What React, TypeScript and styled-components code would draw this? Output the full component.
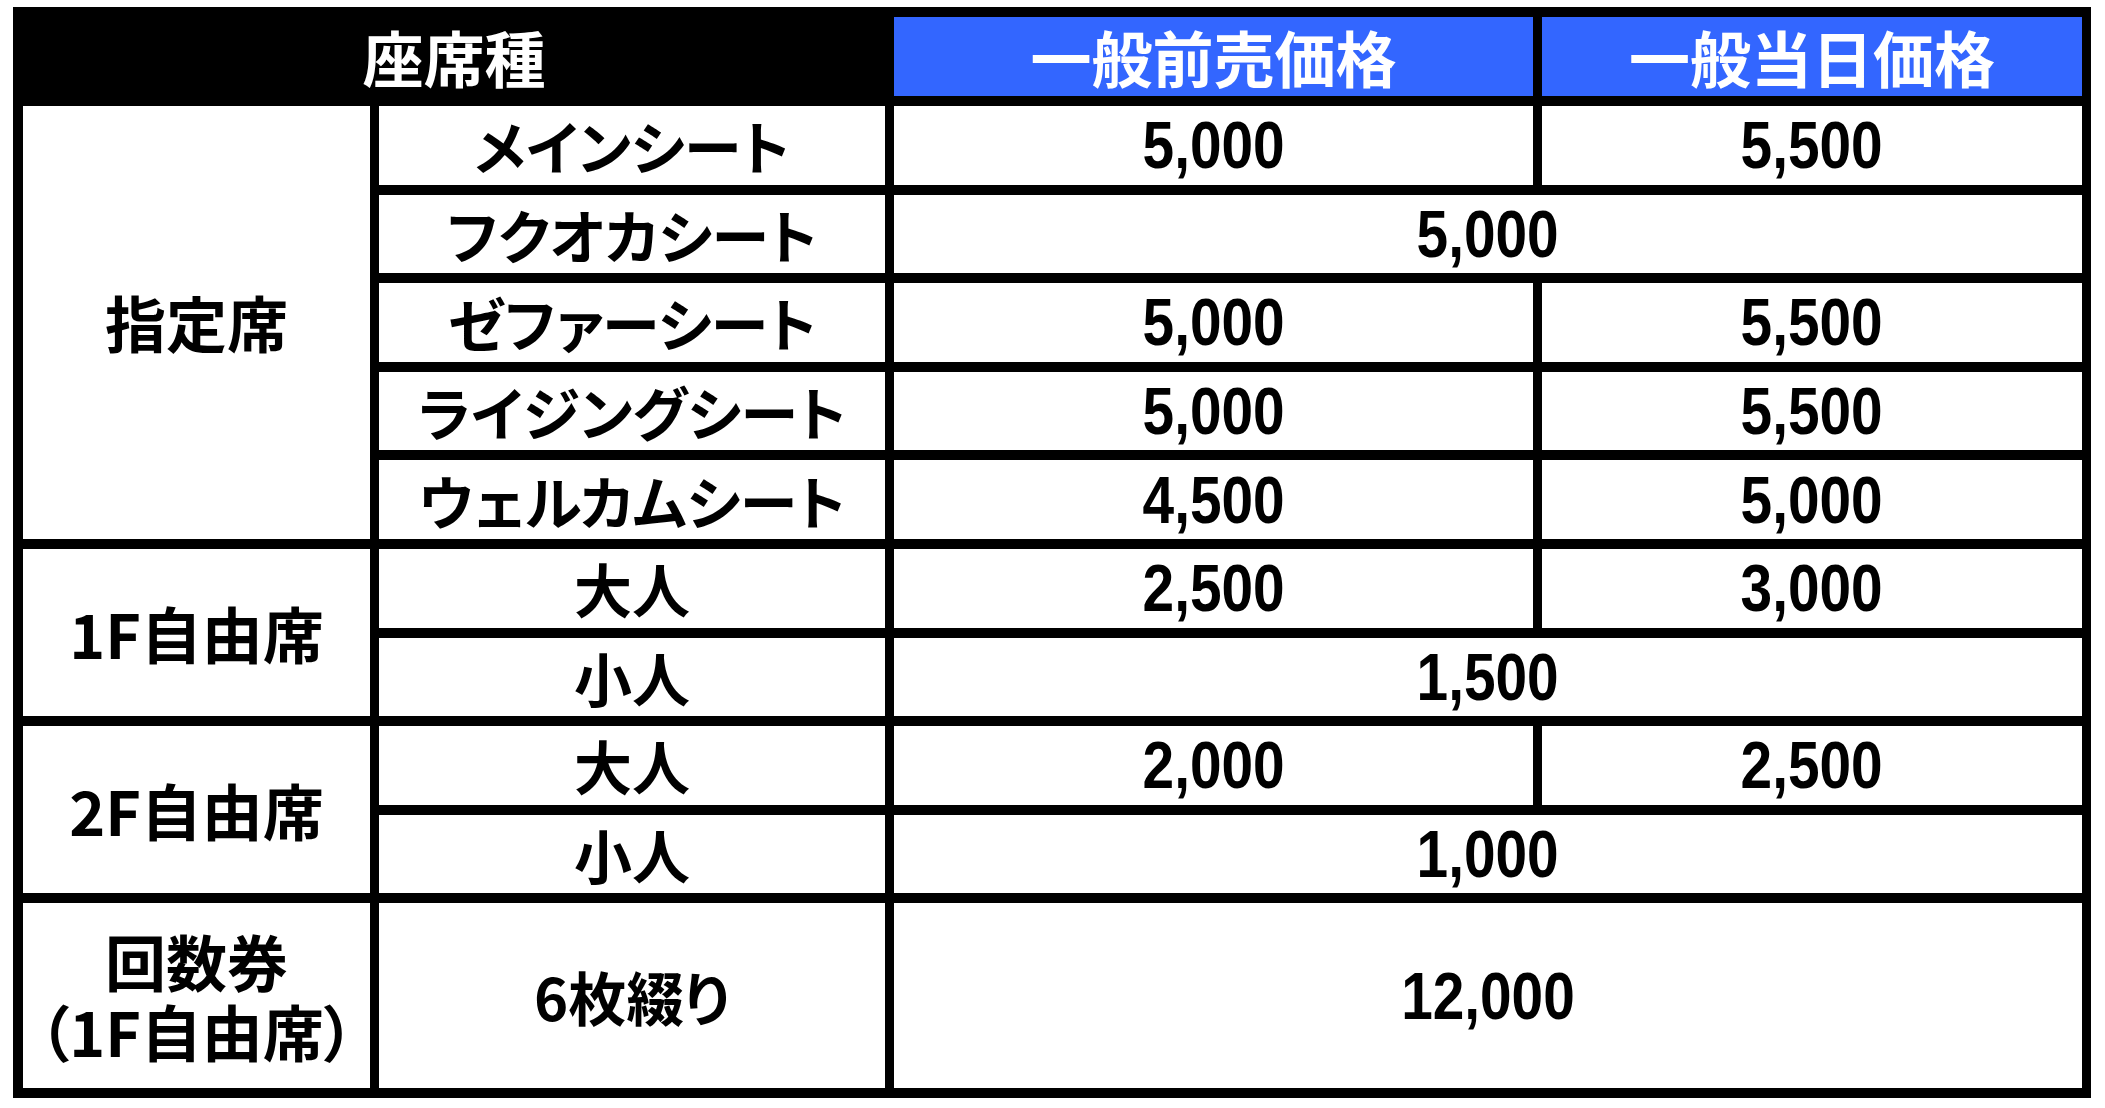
import styled, { createGlobalStyle } from "styled-components";

const GlobalStyle = createGlobalStyle`
  html, body {
    margin: 0;
    padding: 0;
    background: #ffffff;
  }
`;

type Price = { label: string; span?: boolean };

const Page = styled.div`
  padding: 7px 0 0 13px;
`;

const Table = styled.div`
  display: grid;
  width: max-content;
  grid-template-columns: 347px 506px 639px 540px;
  grid-template-rows: 79px repeat(9, 78.6px) 185px;
  column-gap: 9px;
  row-gap: 10px;
  padding: 10px 9px 10px 10px;
  background: #000000;
`;

const Cell = styled.div<{ $col: string; $row: string }>`
  grid-column: ${(p) => p.$col};
  grid-row: ${(p) => p.$row};
  display: flex;
  flex-direction: column;
  align-items: center;
  justify-content: center;
  background: #ffffff;
  color: #000000;
  font-family: "Noto Sans CJK JP", "Noto Sans", sans-serif;
  font-weight: 700;
  font-size: 58px;
  line-height: 70px;
  font-feature-settings: "palt";
  white-space: nowrap;
`;

const GroupCell = styled(Cell)`
  font-size: 61px;
`;

const HeadCell = styled(Cell)<{ $blue?: boolean }>`
  background: ${(p) => (p.$blue ? "#3366ff" : "#000000")};
  color: #ffffff;
  font-size: 61px;
  font-feature-settings: normal;
`;

const PriceCell = styled(Cell)`
  font-family: "Liberation Sans", Arial, sans-serif;
  font-size: 66px;
  font-feature-settings: normal;
`;

const Num = styled.span`
  display: inline-block;
  transform: scaleX(0.86);
`;

const seats: { name: string; prices: Price[] }[] = [
  { name: "メインシート", prices: [{ label: "5,000" }, { label: "5,500" }] },
  { name: "フクオカシート", prices: [{ label: "5,000", span: true }] },
  { name: "ゼファーシート", prices: [{ label: "5,000" }, { label: "5,500" }] },
  { name: "ライジングシート", prices: [{ label: "5,000" }, { label: "5,500" }] },
  { name: "ウェルカムシート", prices: [{ label: "4,500" }, { label: "5,000" }] },
  { name: "大人", prices: [{ label: "2,500" }, { label: "3,000" }] },
  { name: "小人", prices: [{ label: "1,500", span: true }] },
  { name: "大人", prices: [{ label: "2,000" }, { label: "2,500" }] },
  { name: "小人", prices: [{ label: "1,000", span: true }] },
  { name: "6枚綴り", prices: [{ label: "12,000", span: true }] },
];

const groups = [
  { label: ["指定席"], row: "2 / 7" },
  { label: ["1F自由席"], row: "7 / 9" },
  { label: ["2F自由席"], row: "9 / 11" },
  { label: ["回数券", "（1F自由席）"], row: "11 / 12" },
];

export default function App() {
  return (
    <>
      <GlobalStyle />
      <Page>
        <Table>
          <HeadCell $col="1 / 3" $row="1">座席種</HeadCell>
          <HeadCell $col="3" $row="1" $blue>一般前売価格</HeadCell>
          <HeadCell $col="4" $row="1" $blue>一般当日価格</HeadCell>

          {groups.map((g) => (
            <GroupCell key={g.row} $col="1" $row={g.row}>
              {g.label.map((line) => (
                <span key={line}>{line}</span>
              ))}
            </GroupCell>
          ))}

          {seats.map((s, i) => {
            const row = String(i + 2);
            return [
              <Cell key={`n${i}`} $col="2" $row={row}>
                {s.name}
              </Cell>,
              ...s.prices.map((p, j) => (
                <PriceCell
                  key={`p${i}-${j}`}
                  $col={p.span ? "3 / 5" : String(3 + j)}
                  $row={row}
                >
                  <Num>{p.label}</Num>
                </PriceCell>
              )),
            ];
          })}
        </Table>
      </Page>
    </>
  );
}
